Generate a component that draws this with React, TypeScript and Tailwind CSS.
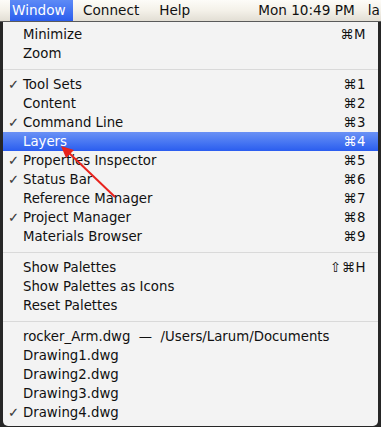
import React from "react";

type Item =
  | { kind: "sep" }
  | { kind: "item"; label: string; key?: string; checked?: boolean; active?: boolean };

const items: Item[] = [
  { kind: "item", label: "Minimize", key: "⌘M" },
  { kind: "item", label: "Zoom" },
  { kind: "sep" },
  { kind: "item", label: "Tool Sets", key: "⌘1", checked: true },
  { kind: "item", label: "Content", key: "⌘2" },
  { kind: "item", label: "Command Line", key: "⌘3", checked: true },
  { kind: "item", label: "Layers", key: "⌘4", active: true },
  { kind: "item", label: "Properties Inspector", key: "⌘5", checked: true },
  { kind: "item", label: "Status Bar", key: "⌘6", checked: true },
  { kind: "item", label: "Reference Manager", key: "⌘7" },
  { kind: "item", label: "Project Manager", key: "⌘8", checked: true },
  { kind: "item", label: "Materials Browser", key: "⌘9" },
  { kind: "sep" },
  { kind: "item", label: "Show Palettes", key: "⇧⌘H" },
  { kind: "item", label: "Show Palettes as Icons" },
  { kind: "item", label: "Reset Palettes" },
  { kind: "sep" },
  { kind: "item", label: "rocker_Arm.dwg  —  /Users/Larum/Documents" },
  { kind: "item", label: "Drawing1.dwg" },
  { kind: "item", label: "Drawing2.dwg" },
  { kind: "item", label: "Drawing3.dwg" },
  { kind: "item", label: "Drawing4.dwg", checked: true },
];

function MenuRow({ item }: { item: Extract<Item, { kind: "item" }> }) {
  return (
    <div
      className={
        item.active
          ? "flex h-[19px] items-center bg-gradient-to-b from-[#6a91f5] to-[#2a5cef] text-white"
          : "flex h-[19px] items-center text-[#111]"
      }
    >
      <span className={item.active ? "w-[20px] pl-[5px] text-white" : "w-[20px] pl-[5px] text-[#3c3c3c]"}>
        {item.checked ? "✓" : ""}
      </span>
      <span className="flex-1 whitespace-pre">{item.label}</span>
      {item.key && <span className="pr-[12px] tracking-[0.5px]">{item.key}</span>}
    </div>
  );
}

export default function App() {
  return (
    <div
      className="relative h-[427px] w-[381px] overflow-hidden bg-[#262626] text-[13.3px] leading-none"
      style={{ fontFamily: '"DejaVu Sans", "Liberation Sans", sans-serif' }}
    >
      {/* Menu bar */}
      <div className="flex h-[22px] items-center border-b border-[#5a5a5a] bg-gradient-to-b from-[#fdfcf8] via-[#f4f1e9] to-[#e2ded4] text-[13.6px] text-[#111]">
        <div className="ml-[10px] flex h-full w-[63px] items-center bg-gradient-to-b from-[#5d8af6] to-[#2b5ded] pl-[2px] text-white">
          Window
        </div>
        <span className="ml-[10px]">Connect</span>
        <span className="ml-[20px]">Help</span>
        <span className="ml-[68px]">Mon 10:49 PM</span>
        <span className="ml-[13px]">la</span>
      </div>

      {/* Window menu */}
      <div className="ml-[3px] w-[375px] rounded-b-[5px] bg-[#f3f3f3] pt-[3px] pb-[4px]">
        {items.map((item, i) =>
          item.kind === "sep" ? (
            <div key={i} className="flex h-[12px] items-center">
              <div className="h-px w-full bg-[#d9d9d9]" />
            </div>
          ) : (
            <MenuRow key={i} item={item} />
          )
        )}
      </div>

      {/* Red annotation arrow */}
      <svg className="absolute left-0 top-0" width="381" height="427">
        <line x1="115" y1="197" x2="68" y2="152" stroke="#e8231d" strokeWidth="2" />
        <polygon points="61,146 74,150 66,158" fill="#e8231d" />
      </svg>
    </div>
  );
}
